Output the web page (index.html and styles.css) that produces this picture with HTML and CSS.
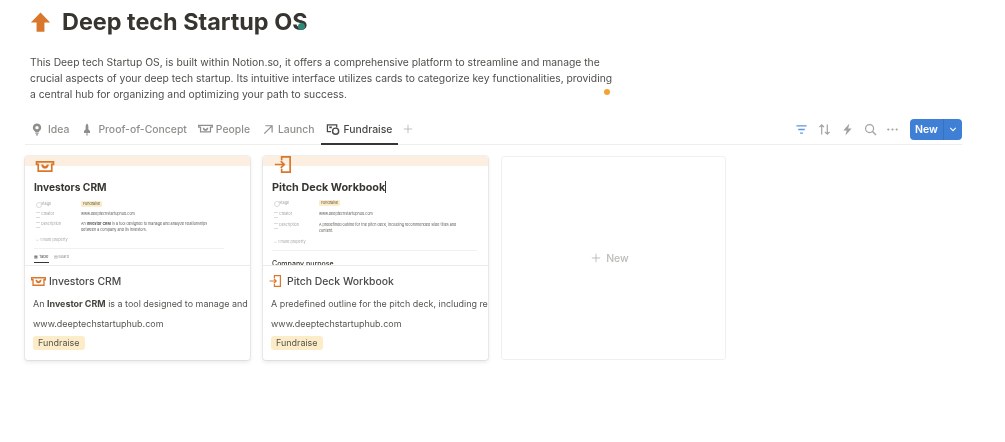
FILE: index.html
```html
<!DOCTYPE html>
<html lang="en">
<head>
<meta charset="utf-8">
<title>Deep tech Startup OS</title>
<link rel="stylesheet" href="styles.css">
</head>
<body>
<main class="page">
  <header class="head">
    <svg class="page-icon" viewBox="0 0 24 24"><path fill="#d9782d" d="M12 1 23 12.5H16.5V23H7.5V12.5H1Z"/></svg>
    <h1 class="title">Deep tech Startup OS<span class="cursor-dot"></span></h1>
  </header>
  <p class="desc">This Deep tech Startup OS, is built within Notion.so, it offers a comprehensive platform to streamline and manage the<br>crucial aspects of your deep tech startup. Its intuitive interface utilizes cards to categorize key functionalities, providing<br>a central hub for organizing and optimizing your path to success.<span class="orange-dot"></span></p>

  <nav class="tabs">
    <a class="tab tab-idea"><svg class="ti" viewBox="0 0 16 16"><path fill="#8f8e8b" d="M8 0a5.500 5.500 0 0 0-3.300 9.900c.6.500.9 1 1 1.600h4.600c.1-.6.400-1.100 1-1.600A5.500 5.500 0 0 0 8 0Zm0 3.200a2.300 2.300 0 1 1 0 4.600 2.300 2.300 0 0 1 0-4.600ZM5.800 12.300h4.400v1.400H5.800ZM6.800 14.300h2.400V16H6.800Z"/></svg>Idea</a>
    <a class="tab tab-poc"><svg class="ti" viewBox="0 0 16 16"><path fill="#8f8e8b" d="M8 0c1.200 1 1.800 2.500 1.800 4v3.500l2.200 2.500v2.500H4V10l2.200-2.500V4C6.200 2.500 6.800 1 8 0ZM7.200 13h1.600v3H7.200Z"/></svg>Proof-of-Concept</a>
    <a class="tab tab-people"><svg class="ti wide" viewBox="0 0 16 10"><path fill="none" stroke="#8f8e8b" stroke-width="1.300" d="M.7.700h14.600v1.800h-2v5H2.700v-5h-2Z"/><path fill="#8f8e8b" d="M5 3h1.600c.2 1 .7 1.500 1.400 1.500S9.200 4 9.400 3H11c-.2 2-1.300 3.400-3 3.400S5.200 5 5 3Z"/></svg>People</a>
    <a class="tab tab-launch"><svg class="ti" viewBox="0 0 16 16"><path fill="none" stroke="#8f8e8b" stroke-width="1.600" d="M3 13.500 13 3.500M4.500 3h9v9"/></svg>Launch</a>
    <a class="tab active"><svg class="ti wide" viewBox="0 0 16 13"><path fill="none" stroke="#4a4946" stroke-width="1.500" d="M5 9H.8V1h11v3"/><path fill="#4a4946" d="M3 3h3v2H3z"/><circle cx="10.500" cy="8.500" r="3.600" fill="none" stroke="#4a4946" stroke-width="1.700"/></svg>Fundraise</a>
    <svg class="add" viewBox="0 0 12 12"><path fill="none" stroke="#b4b3b0" stroke-width="1" d="M6 1v10M1 6h10"/></svg>
    <div class="tools">
      <svg class="tool" viewBox="0 0 14 14"><path fill="none" stroke="#5b97e0" stroke-width="1.400" d="M1.500 3h11M3.500 7h7M5.500 11h3"/></svg>
      <svg class="tool" viewBox="0 0 14 14"><path fill="none" stroke="#a3a29f" stroke-width="1.300" d="M4 12.500V2M1.500 4.500 4 2l2.500 2.500M10 1.500V12M7.500 9.500 10 12l2.500-2.500"/></svg>
      <svg class="tool" viewBox="0 0 14 14"><path fill="#a3a29f" d="M9 .5 2.500 8h3.600L4.800 13.500 11.500 6H7.800Z"/></svg>
      <svg class="tool" viewBox="0 0 14 14"><circle cx="6" cy="6" r="4.300" fill="none" stroke="#a3a29f" stroke-width="1.300"/><path stroke="#a3a29f" stroke-width="1.400" d="m9.200 9.200 3.800 3.800"/></svg>
      <svg class="tool" viewBox="0 0 14 14"><g fill="#a3a29f"><circle cx="2.500" cy="7" r="1.200"/><circle cx="7" cy="7" r="1.200"/><circle cx="11.500" cy="7" r="1.200"/></g></svg>
      <div class="new-btn"><span class="new-label">New</span><span class="new-caret"><svg viewBox="0 0 10 6"><path fill="none" stroke="#fff" stroke-width="1.300" d="m1.500 1 3.500 3.500L8.500 1"/></svg></span></div>
    </div>
  </nav>

  <section class="gallery">
    <article class="card">
      <div class="thumb">
        <div class="cover"></div>
        <svg class="thumb-icon thumb-icon-a" viewBox="0 0 22 13"><path fill="none" stroke="#d9782d" stroke-width="2" d="M1 1h20v3h-2v8H3V4H1Z"/><path fill="#d9782d" d="M6.500 4h2.500c.2 1.200.9 2 2 2s1.800-.8 2-2h2.500c-.2 2.700-1.900 5-4.500 5S6.700 6.700 6.500 4Z"/></svg>
        <div class="doc doc-a">
          <div class="doc-title">Investors CRM</div>
          <div class="prop"><span class="pk pk-tag">Stage</span><span class="pv"><span class="mini-tag">Fundraise</span></span></div>
          <div class="prop"><span class="pk">Creator</span><span class="pv">www.deeptechstartuphub.com</span></div>
          <div class="prop"><span class="pk">Description</span><span class="pv">An <b>Investor CRM</b> is a tool designed to manage and analyze relationships between a company and its investors.</span></div>
          <div class="more">⌵ 1 more property</div>
          <div class="rule"></div>
          <div class="views"><span class="view on">▦ Table</span><span class="view">▤ Board</span></div>
        </div>
      </div>
      <div class="info">
        <div class="card-title"><svg class="ci" viewBox="0 0 22 13"><path fill="none" stroke="#d9782d" stroke-width="2" d="M1 1h20v3h-2v8H3V4H1Z"/><path fill="#d9782d" d="M6.500 4h2.500c.2 1.200.9 2 2 2s1.800-.8 2-2h2.500c-.2 2.700-1.900 5-4.500 5S6.700 6.700 6.500 4Z"/></svg>Investors CRM</div>
        <div class="line">An <b>Investor CRM</b> is a tool designed to manage and analyze relationships between a company</div>
        <div class="line">www.deeptechstartuphub.com</div>
        <span class="tag">Fundraise</span>
      </div>
    </article>

    <article class="card">
      <div class="thumb">
        <div class="cover"></div>
        <svg class="thumb-icon thumb-icon-b" viewBox="0 0 20 20"><path fill="none" stroke="#d9782d" stroke-width="2" d="M9 5V1h10v18H9v-4"/><path fill="none" stroke="#d9782d" stroke-width="2" d="M1 10h11M8 6l4 4-4 4"/></svg>
        <div class="doc doc-b">
          <div class="doc-title">Pitch Deck Workbook<span class="caret"></span></div>
          <div class="prop"><span class="pk pk-tag">Stage</span><span class="pv"><span class="mini-tag">Fundraise</span></span></div>
          <div class="prop"><span class="pk">Creator</span><span class="pv">www.deeptechstartuphub.com</span></div>
          <div class="prop"><span class="pk">Description</span><span class="pv">A predefined outline for the pitch deck, including recommended slide titles and content.</span></div>
          <div class="more">⌵ 1 more property</div>
          <div class="rule"></div>
          <div class="purpose">Company purpose</div>
        </div>
      </div>
      <div class="info">
        <div class="card-title"><svg class="ci ci-b" viewBox="0 0 20 20"><path fill="none" stroke="#d9782d" stroke-width="2" d="M9 5V1h10v18H9v-4"/><path fill="none" stroke="#d9782d" stroke-width="2" d="M1 10h11M8 6l4 4-4 4"/></svg>Pitch Deck Workbook</div>
        <div class="line">A predefined outline for the pitch deck, including recommended slide titles and content.</div>
        <div class="line">www.deeptechstartuphub.com</div>
        <span class="tag">Fundraise</span>
      </div>
    </article>

    <div class="card-new"><svg class="plus" viewBox="0 0 12 12"><path fill="none" stroke="#b4b3b0" stroke-width="1" d="M6 1v10M1 6h10"/></svg>New</div>
  </section>
</main>
</body>
</html>
```
FILE: styles.css
```css
* { box-sizing: border-box; }
html, body { margin: 0; background: #fff; }
body { width: 1005px; height: 442px; overflow: hidden; font-family: Inter, "Liberation Sans", sans-serif; color: #4a4946; }
.page { position: relative; padding: 0 43px 0 25px; filter: blur(0.45px); }

.head { display: flex; align-items: center; height: 44px; padding-left: 5px; }
.page-icon { width: 21px; height: 22px; margin-right: 11px; flex: none; }
.title { position: relative; margin: 0; font-size: 23.4px; font-weight: 700; color: #37352f; line-height: 44px; white-space: nowrap; }
.cursor-dot { position: absolute; right: 3px; top: 23px; width: 7px; height: 7px; border-radius: 50%; background: #2d8a78; }

.desc { position: relative; margin: 10px 0 0; padding-left: 5px; font-size: 10.33px; line-height: 16px; color: #4f4e4a; white-space: nowrap; }
.orange-dot { position: absolute; left: 579px; top: 35px; width: 6px; height: 6px; border-radius: 50%; background: #f5a234; }

.tabs { display: flex; align-items: stretch; height: 32px; margin-top: 11px; border-bottom: 1px solid #eeeeec; }
.tab { display: flex; align-items: center; height: 32px; padding: 0 6px; font-size: 10.4px; color: #8f8e8b; font-weight: 500; white-space: nowrap; }
.tab-people { margin-left: -1px; }
.tab.active { color: #4a4946; border-bottom: 2px solid #37352f; padding: 2px 6px 0 5px; }
.ti { width: 12px; height: 13px; margin-right: 5px; flex: none; }
.tab-launch .ti { margin-right: 4px; }
.ti.wide { width: 15px; height: 11px; margin-right: 3px; }
.add { width: 10px; height: 10px; align-self: center; margin: 0 0 0 5px; }
.tools { margin-left: auto; display: flex; align-items: center; gap: 9.75px; height: 32px; }
.tool { width: 13px; height: 13px; }
.new-btn { display: flex; height: 21px; margin-left: 1px; border-radius: 4px; overflow: hidden; background: #3f7fd6; color: #fff; font-size: 10.5px; font-weight: 600; }
.new-label { width: 34px; display: flex; align-items: center; justify-content: center; border-right: 1px solid #3671c2; }
.new-caret { width: 18px; display: flex; align-items: center; justify-content: center; }
.new-caret svg { width: 8px; height: 5px; }

.gallery { display: grid; grid-template-columns: repeat(3, 225px); column-gap: 13px; margin-top: 11px; height: 204px; }
.card { display: flex; flex-direction: column; height: 204px; border-radius: 3px; background: #fff; overflow: hidden; box-shadow: 0 0 0 1px rgba(55,53,47,.07), 0 2px 4px rgba(55,53,47,.12); }
.thumb { position: relative; height: 110px; overflow: hidden; flex: none; border-bottom: 1px solid #ecebe9; }
.cover { height: 10px; background: #fdeee2; }
.thumb-icon { position: absolute; }
.thumb-icon-a { left: 9px; top: 5px; width: 22px; height: 11px; }
.thumb-icon-b { left: 10px; top: 0; width: 19px; height: 17px; }
.doc { padding: 0 9px; }
.doc-a { padding-top: 14px; }
.doc-b { padding-top: 15px; }
.doc-title { font-size: 10.2px; font-weight: 700; line-height: 14px; color: #37352f; white-space: nowrap; margin-bottom: 7px; }
.doc-b .doc-title { font-size: 10.8px; margin-bottom: 5px; }
.caret { display: inline-block; width: 1px; height: 12px; background: #37352f; vertical-align: -2px; }
.prop { display: flex; font-size: 3.7px; line-height: 6px; margin-bottom: 4px; color: #5a5955; }
.doc-b .prop { margin-bottom: 5px; }
.pk { position: relative; width: 47px; flex: none; padding-left: 7px; color: #a3a29f; }
.pk::before { content: ""; position: absolute; left: 2px; top: 1px; width: 4px; height: 4px; border-top: 1px solid #dcdbd8; border-bottom: 1px solid #dcdbd8; }
.pk-tag::before { border: 1px solid #dcdbd8; border-radius: 50%; }
.pv { width: 135px; }
.doc-b .pv { width: 150px; }
.mini-tag { display: inline-block; padding: 0 2px; background: #fdecc8; border-radius: 1px; }
.more { font-size: 3.7px; line-height: 6px; color: #a3a29f; padding-left: 2px; }
.rule { height: 1px; background: #f1f1ef; margin-top: 5px; width: 190px; }
.doc-b .rule { width: 205px; }
.views { display: flex; gap: 5px; margin-top: 5px; font-size: 3.7px; line-height: 6px; color: #8f8e8b; }
.view { padding-bottom: 2px; }
.view.on { color: #4a4946; border-bottom: 1px solid #37352f; }
.purpose { margin-top: 8px; font-size: 7px; font-weight: 500; line-height: 9px; color: #37352f; }

.info { padding: 7px 0 0 8px; white-space: nowrap; overflow: hidden; }
.card-title { display: flex; align-items: center; height: 16px; margin-bottom: 5px; font-size: 10.4px; font-weight: 500; color: #4a4946; }
.ci { width: 15px; height: 9px; margin: 0 3px 0 -2px; flex: none; }
.ci-b { width: 12px; height: 12px; margin: 0 6px 0 -2px; }
.line { height: 20px; font-size: 8.95px; line-height: 20px; color: #55544f; }
.line b { font-weight: 700; color: #46453f; }
.tag { display: block; width: fit-content; height: 14px; margin-top: 2px; padding: 0 5px; border-radius: 3px; background: #fdecc8; font-size: 8.95px; line-height: 14px; color: #55544f; }

.card-new { display: flex; align-items: center; justify-content: center; height: 204px; border-radius: 3px; border: 1px solid #f0f0ee; font-size: 10.5px; font-weight: 500; color: #bdbcb9; padding-right: 7px; }
.plus { width: 10px; height: 10px; margin-right: 5px; }
```
